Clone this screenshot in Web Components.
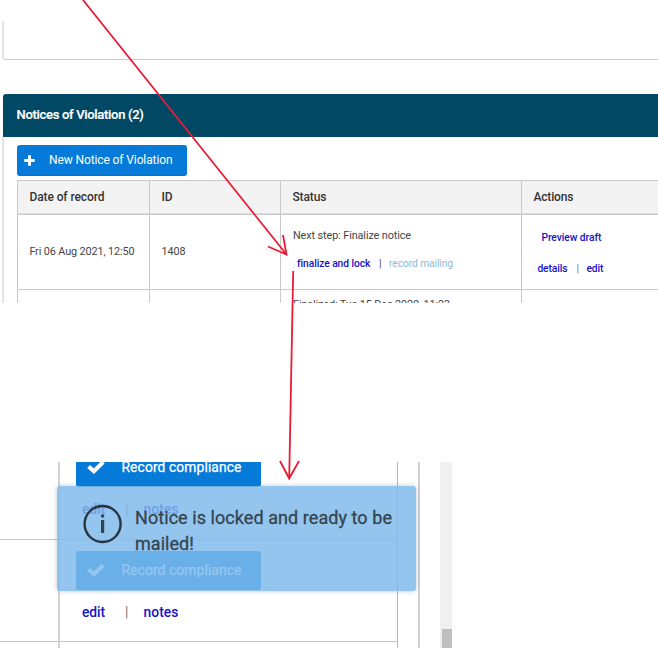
<!DOCTYPE html>
<html lang="en">
<head>
<meta charset="utf-8">
<title>Notices of Violation</title>
<style>
body { margin: 0; background: #fff; font-family: Roboto, "Liberation Sans", sans-serif; color: #444; overflow: hidden; }
</style>
</head>
<body>
<violation-guide></violation-guide>
<script>
const define = (name, html, setup) => customElements.define(name, class extends HTMLElement {
  constructor() { super(); this.attachShadow({ mode: 'open' }).innerHTML = html; }
  connectedCallback() { if (setup) setup(this); }
});

/* Single-line label whose tracking is spread over the width in "w". */
define('ui-label', `<style>
  :host { display: block; white-space: nowrap; line-height: 16px; flex: none; }
  span { display: inline-block; }
</style><span><slot></slot></span>`, el => {
  const span = el.shadowRoot.querySelector('span');
  const w = Number(el.getAttribute('w'));
  const n = el.textContent.length;
  if (w && n) {
    span.style.letterSpacing = ((w - span.getBoundingClientRect().width) / n) + 'px';
    el.style.width = w + 'px';
  }
});

define('action-button', `<style>
  :host { display: flex; align-items: center; box-sizing: border-box; background: #057ad9; color: #fff; border-radius: 3px; border-bottom: 1px solid #0870c4; }
</style><slot></slot>`);

define('plus-icon', `<style>:host { display: block; width: 11px; height: 11px; flex: none } svg { display: block }</style>
<svg width="11" height="11" viewBox="0 0 11 11"><path d="M5.5 .3v10.4M.3 5.5h10.4" stroke="#fff" stroke-width="2.9"/></svg>`);

define('check-icon', `<style>:host { display: block; width: 18px; height: 14px; flex: none } svg { display: block }</style>
<svg width="18" height="14" viewBox="0 0 18 14"><path d="M1.6 6.4 6.9 11.2 16.2 2" fill="none" stroke="#fff" stroke-width="4"/></svg>`);

define('text-link', `<style>:host { display: block; color: #1612c4; font-weight: 500; }</style><slot></slot>`);

define('grid-cell', `<style>
  :host { display: block; box-sizing: border-box; border-left: 1px solid #c9c9c9; border-top: 1px solid #c9c9c9; padding-left: 11.4px; }
  :host([head]) { background: #f3f3f3; color: #333; font-weight: 500; font-size: 12px; padding-top: 8px; border-bottom: 1px solid #ddd; }
</style><slot></slot>`);

define('notices-panel', `<style>
  :host { display: block; height: 302.5px; overflow: hidden; }
  .previous { margin: 21px 0 0 2px; height: 39px; box-sizing: border-box; border-left: 2px solid #e2e2e2; border-bottom: 1px solid #ccc; border-bottom-left-radius: 3px; }
  header { margin: 34px 0 0 3px; height: 43px; box-sizing: border-box; padding: 13px 0 0 13.5px; background: #004863; color: #fff; font-size: 13px; font-weight: 500; border-top-left-radius: 3px; -webkit-text-stroke: .2px #fff; }
  .body { margin-left: 2px; border-left: 2px solid #e4e4e4; padding: 8px 0 0 13px; height: 200px; }
  action-button { width: 170px; height: 31px; padding-left: 7px; gap: 14px; font-size: 12px; }
  .table { margin-top: 4px; display: grid; grid-template-columns: 132px 131px 241px 1fr; grid-template-rows: 34px 75px 30px; font-size: 10.8px; }
  .middle { padding-top: 29px; }
  .status { padding-top: 13px; padding-left: 12px; }
  .row { display: flex; }
  .row, text-link { font-size: 10.3px; }
  .muted { color: #91b9d6; }
</style>
<div class="previous"></div>
<header><ui-label w="127">Notices of Violation (2)</ui-label></header>
<div class="body">
  <action-button><plus-icon></plus-icon><ui-label w="123.5">New Notice of Violation</ui-label></action-button>
  <div class="table">
    <grid-cell head><ui-label w="75">Date of record</ui-label></grid-cell>
    <grid-cell head><ui-label w="11">ID</ui-label></grid-cell>
    <grid-cell head><ui-label w="34">Status</ui-label></grid-cell>
    <grid-cell head><ui-label w="40">Actions</ui-label></grid-cell>
    <grid-cell class="middle"><ui-label w="105">Fri 06 Aug 2021, 12:50</ui-label></grid-cell>
    <grid-cell class="middle"><ui-label w="24">1408</ui-label></grid-cell>
    <grid-cell class="status">
      <ui-label w="118">Next step: Finalize notice</ui-label>
      <div class="row" style="padding:12px 0 0 4px">
        <text-link><ui-label w="73">finalize and lock</ui-label></text-link>
        <ui-label style="margin-left:9px" w="3">|</ui-label>
        <ui-label class="muted" style="margin-left:7px" w="64">record mailing</ui-label>
      </div>
    </grid-cell>
    <grid-cell style="padding-top:15px">
      <text-link style="margin-left:8px"><ui-label w="60">Preview draft</ui-label></text-link>
      <div class="row" style="padding:15px 0 0 4px">
        <text-link><ui-label w="30">details</ui-label></text-link>
        <ui-label style="margin-left:9px;color:#777" w="3">|</ui-label>
        <text-link style="margin-left:7px"><ui-label w="17">edit</ui-label></text-link>
      </div>
    </grid-cell>
    <grid-cell></grid-cell><grid-cell></grid-cell>
    <grid-cell style="padding:7px 0 0 12px"><ui-label w="157">Finalized: Tue 15 Dec 2020, 11:23</ui-label></grid-cell>
    <grid-cell></grid-cell>
  </div>
</div>`);

define('toast-message', `<style>
  :host { display: flex; box-sizing: border-box; width: 359px; height: 105px; padding: 18px 0 0 26px; gap: 12px; border-radius: 3px; background: rgba(126,186,235,.84); box-shadow: 0 0 5px rgba(90,120,150,.4); color: #35444f; font-size: 18px; }
  svg { flex: none; }
  .text { padding-top: 1px; -webkit-text-stroke: .3px #35444f; }
  ui-label { line-height: 26px; }
</style>
<svg width="40" height="40" viewBox="0 0 40 40"><circle cx="19.6" cy="20" r="18" fill="none" stroke="#273540" stroke-width="2.4"/><path d="M19.6 16v13" stroke="#34434e" stroke-width="3.2"/><circle cx="19.6" cy="12" r="1.8" fill="#34434e"/></svg>
<div class="text"><ui-label w="257">Notice is locked and ready to be</ui-label><ui-label w="59">mailed!</ui-label></div>`);

define('compliance-cell', `<style>
  :host { display: block; box-sizing: border-box; height: 102px; padding: 11px 0 0 16px; border-bottom: 1px solid #c4c4c4; font-size: 14px; }
  action-button { width: 185px; height: 39px; padding-left: 11px; gap: 16.5px; font-size: 13.8px; }
  action-button ui-label { -webkit-text-stroke: .25px #fff; }
  .links { display: flex; padding: 14px 0 0 6px; font-size: 13.8px; }
</style>
<action-button><check-icon></check-icon><ui-label w="120">Record compliance</ui-label></action-button>
<div class="links"><text-link><ui-label w="23">edit</ui-label></text-link><ui-label style="margin-left:20px;color:#777" w="4">|</ui-label><text-link style="margin-left:14.5px"><ui-label w="35">notes</ui-label></text-link></div>`);

define('compliance-panel', `<style>
  :host { display: grid; grid-template-columns: 58px 340px 22px 20px 12px; width: 452px; height: 186px; margin-top: 159.5px; overflow: hidden; position: relative; }
  .left, .main { display: flex; flex-direction: column; height: 226px; margin-top: -24px; }
  .left i { display: block; box-sizing: border-box; height: 102px; border-bottom: 1px solid #c4c4c4; flex: none; }
  .main { border-left: 2px solid #d2d2d2; border-right: 1px solid #b8b8b8; box-sizing: border-box; }
  compliance-cell { flex: none; }
  compliance-cell:first-child { margin-top: -1px; height: 103px; }
  .edge { border-right: 2px solid #d0d0d0; }
  .track { background: #f0f0f0; }
  .thumb { margin: 167px 0 0 2px; height: 19px; background: #bfbfbf; }
  toast-message { position: absolute; left: 57px; top: 24px; }
</style>
<div class="left"><i></i><i></i></div>
<div class="main"><compliance-cell></compliance-cell><compliance-cell></compliance-cell></div>
<div class="edge"></div><div></div>
<div class="track"><div class="thumb"></div></div>
<toast-message></toast-message>`);

define('callout-arrows', `<style>:host { position: absolute; left: 0; top: 0; pointer-events: none } svg { display: block }</style>
<svg width="658" height="648" fill="none" stroke="#e91c35" stroke-width="1.8"><path d="M83 0 286.5 254.5M268 246.5 286.5 254.5 283 235M293.2 271 289.2 478.5M280 461 289.2 478.5 299 461"/></svg>`);

define('violation-guide', `<style>:host { display: block; position: relative; width: 658px; height: 648px; overflow: hidden }</style>
<notices-panel></notices-panel><compliance-panel></compliance-panel><callout-arrows></callout-arrows>`);
</script>
</body>
</html>
